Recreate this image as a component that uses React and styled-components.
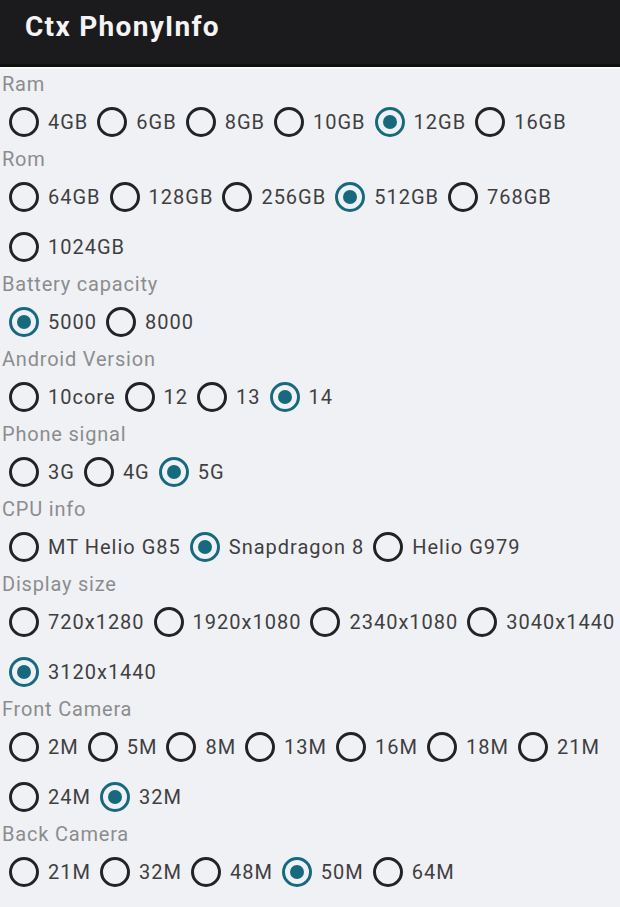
import React, { useState } from "react";
import styled, { createGlobalStyle } from "styled-components";

const GlobalStyle = createGlobalStyle`
  html, body {
    margin: 0;
    padding: 0;
    background: #f0f1f5;
  }
  body {
    font-family: Roboto, "Noto Sans", "Liberation Sans", sans-serif;
  }
`;

const Page = styled.div`
  width: 620px;
  min-height: 907px;
  background: #f0f1f5;
`;

const AppBar = styled.header`
  height: 64px;
  display: flex;
  align-items: center;
  padding-left: 25px;
  background: #1b1b1d;
  border-bottom: 3px solid #101011;
  box-shadow: 0 2px 0 #fbfbfc;
`;

const Title = styled.h1`
  margin: 0;
  margin-top: -11px;
  font-size: 28px;
  font-weight: 700;
  letter-spacing: 1.3px;
  color: #f4f4f4;
`;

const Content = styled.main`
  padding-top: 5px;
`;

const Label = styled.div`
  height: 25px;
  line-height: 25px;
  padding-left: 2px;
  font-size: 20px;
  letter-spacing: 0.8px;
  color: #8c8c8e;
`;

const Group = styled.div`
  display: flex;
  flex-wrap: wrap;
`;

const Option = styled.label`
  height: 50px;
  display: flex;
  align-items: center;
  cursor: pointer;
  font-size: 20px;
  letter-spacing: 1px;
  color: #3f3f41;
`;

const Dot = styled.span`
  box-sizing: border-box;
  width: 30px;
  height: 30px;
  margin: 0 9px 0 9px;
  border-radius: 50%;
  border: 3px solid ${({ $on }) => ($on ? "#17697e" : "#232325")};
  display: flex;
  align-items: center;
  justify-content: center;

  &::after {
    content: "";
    width: 14px;
    height: 14px;
    border-radius: 50%;
    background: #17697e;
    display: ${({ $on }) => ($on ? "block" : "none")};
  }
`;

const SECTIONS = [
  { title: "Ram", options: ["4GB", "6GB", "8GB", "10GB", "12GB", "16GB"], value: "12GB" },
  { title: "Rom", options: ["64GB", "128GB", "256GB", "512GB", "768GB", "1024GB"], value: "512GB" },
  { title: "Battery capacity", options: ["5000", "8000"], value: "5000" },
  { title: "Android Version", options: ["10core", "12", "13", "14"], value: "14" },
  { title: "Phone signal", options: ["3G", "4G", "5G"], value: "5G" },
  { title: "CPU info", options: ["MT Helio G85", "Snapdragon 8", "Helio G979"], value: "Snapdragon 8" },
  {
    title: "Display size",
    options: ["720x1280", "1920x1080", "2340x1080", "3040x1440", "3120x1440"],
    value: "3120x1440"
  },
  {
    title: "Front Camera",
    options: ["2M", "5M", "8M", "13M", "16M", "18M", "21M", "24M", "32M"],
    value: "32M"
  },
  { title: "Back Camera", options: ["21M", "32M", "48M", "50M", "64M"], value: "50M" }
];

const RadioGroup = ({ title, options, value, onChange }) => (
  <section>
    <Label>{title}</Label>
    <Group role="radiogroup">
      {options.map((opt) => (
        <Option key={opt} onClick={() => onChange(opt)}>
          <Dot $on={opt === value} />
          {opt}
        </Option>
      ))}
    </Group>
  </section>
);

export default function App() {
  const [values, setValues] = useState(() =>
    Object.fromEntries(SECTIONS.map((s) => [s.title, s.value]))
  );

  return (
    <Page>
      <GlobalStyle />
      <AppBar>
        <Title>Ctx PhonyInfo</Title>
      </AppBar>
      <Content>
        {SECTIONS.map((s) => (
          <RadioGroup
            key={s.title}
            title={s.title}
            options={s.options}
            value={values[s.title]}
            onChange={(v) => setValues({ ...values, [s.title]: v })}
          />
        ))}
      </Content>
    </Page>
  );
}
